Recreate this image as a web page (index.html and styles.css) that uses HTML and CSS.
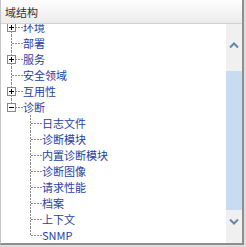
FILE: index.html
```html
<!DOCTYPE html>
<html lang="zh">
<head>
  <meta charset="UTF-8" />
  <title>域结构</title>
  <link rel="stylesheet" href="styles.css">
</head>
<body>
  <div class="panel">
    <div class="panel-head">域结构</div>
    <div class="panel-body">
      <div class="tree">
        <div class="tree-list">
          <div class="row"><span class="conn"><svg class="box" viewBox="0 0 9 9"><rect x="0.5" y="0.5" width="8" height="8"/><path d="M2 4.5h5M4.5 2v5"/></svg></span><span class="label">环境</span></div>
          <div class="row"><span class="conn"></span><span class="label">部署</span></div>
          <div class="row"><span class="conn"><svg class="box" viewBox="0 0 9 9"><rect x="0.5" y="0.5" width="8" height="8"/><path d="M2 4.5h5M4.5 2v5"/></svg></span><span class="label">服务</span></div>
          <div class="row"><span class="conn"></span><span class="label">安全领域</span></div>
          <div class="row"><span class="conn"><svg class="box" viewBox="0 0 9 9"><rect x="0.5" y="0.5" width="8" height="8"/><path d="M2 4.5h5M4.5 2v5"/></svg></span><span class="label">互用性</span></div>
          <div class="row"><span class="conn last"><svg class="box" viewBox="0 0 9 9"><rect x="0.5" y="0.5" width="8" height="8"/><path d="M2 4.5h5"/></svg></span><span class="label">诊断</span></div>
          <div class="row child"><span class="conn"></span><span class="label">日志文件</span></div>
          <div class="row child"><span class="conn"></span><span class="label">诊断模块</span></div>
          <div class="row child"><span class="conn"></span><span class="label">内置诊断模块</span></div>
          <div class="row child"><span class="conn"></span><span class="label">诊断图像</span></div>
          <div class="row child"><span class="conn"></span><span class="label">请求性能</span></div>
          <div class="row child"><span class="conn"></span><span class="label">档案</span></div>
          <div class="row child"><span class="conn"></span><span class="label">上下文</span></div>
          <div class="row child"><span class="conn last"></span><span class="label">SNMP</span></div>
        </div>
      </div>
      <div class="scrollbar">
        <div class="scroll-btn up">
          <svg width="10" height="6" viewBox="0 0 10 6"><path d="M1 5.5L5 1.5L9 5.5"/></svg>
        </div>
        <div class="scroll-thumb"></div>
        <div class="scroll-btn down">
          <svg width="10" height="6" viewBox="0 0 10 6"><path d="M1 0.5L5 4.5L9 0.5"/></svg>
        </div>
      </div>
    </div>
  </div>
</body>
</html>
```

FILE: styles.css
```css
body {
  margin: 0;
  background: #dedede;
  font-family: "Noto Sans CJK SC", "Noto Sans", sans-serif;
}

.panel {
  box-sizing: border-box;
  width: 244px;
  height: 245px;
  background: #fff;
  border-left: 1px solid #c4c4c4;
  border-right: 2px solid #8e8e8e;
  border-bottom: 2px solid #8e8e8e;
  display: flex;
  flex-direction: column;
  overflow: hidden;
}

.panel-head {
  box-sizing: border-box;
  height: 24px;
  padding-left: 4px;
  font-size: 11px;
  line-height: 24px;
  color: #333;
  background: linear-gradient(#fdfdfd, #ececec);
  border-bottom: 1px solid #d2d2d2;
}

.panel-body {
  flex: 1;
  display: flex;
  min-height: 0;
}

.tree {
  flex: 1;
  overflow: hidden;
}

/* list is scrolled a few pixels, first row sits under the header */
.tree-list {
  margin-top: -5px;
}

.row {
  display: flex;
  align-items: center;
  height: 16px;
}

.row.child {
  padding-left: 19px;
}

.conn {
  flex: none;
  box-sizing: border-box;
  width: 22px;
  height: 16px;
  padding-left: 6px;
  display: flex;
  align-items: center;
  background:
    repeating-linear-gradient(to right, #8a8a8a 0 2px, transparent 2px 3px) 11px 8px / 11px 1px no-repeat,
    repeating-linear-gradient(to bottom, #8a8a8a 0 2px, transparent 2px 3px) 10px 0 / 1px 16px no-repeat;
}

.conn.last {
  background-size: 11px 1px, 1px 8px;
}

.box {
  width: 9px;
  height: 9px;
  margin-top: 1px;
}

.box rect {
  fill: #fff;
  stroke: #8a8a8a;
}

.box path {
  stroke: #000;
  stroke-width: 1;
}

.label {
  font-size: 11px;
  color: #1f3ea6;
  white-space: nowrap;
}

.scrollbar {
  flex: none;
  width: 16px;
  background: #f0f0f0;
  display: flex;
  flex-direction: column;
}

.scroll-btn {
  display: flex;
  justify-content: center;
}

.scroll-btn.up {
  height: 47px;
  padding-top: 18px;
  box-sizing: border-box;
}

.scroll-btn.down {
  flex: 1;
  padding-top: 9px;
  box-sizing: border-box;
}

.scroll-btn path {
  fill: none;
  stroke: #6486a8;
  stroke-width: 2;
}

.scroll-thumb {
  height: 139px;
  background: #c7dbf1;
}
```
